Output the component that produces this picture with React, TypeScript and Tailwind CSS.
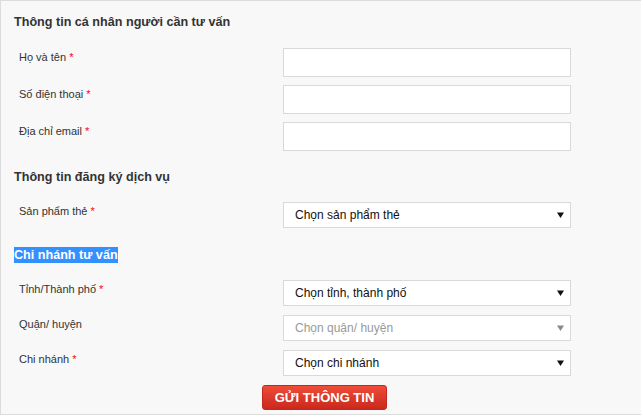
import React from 'react';

const font = { fontFamily: '"Liberation Sans", Arial, sans-serif' };

const Label = ({ text, required }: { text: string; required?: boolean }) => (
  <div className="w-[269px] shrink-0 pl-[5px] pt-[1px] text-[11px] leading-[16px] text-[#333]">
    {text}
    {required && <span className="text-[#ff0000]"> *</span>}
  </div>
);

const TextRow = ({ label }: { label: string }) => (
  <div className="flex h-[29px]">
    <Label text={label} required />
    <input
      type="text"
      className="h-[29px] w-[288px] border border-[#d9d9d9] bg-white outline-none"
    />
  </div>
);

const Arrow = ({ disabled }: { disabled?: boolean }) => (
  <svg width="7" height="6" viewBox="0 0 7 6" className={disabled ? 'text-[#8a8a8a]' : 'text-[#111]'}>
    <path d="M0 0.5 H7 L3.5 6 Z" fill="currentColor" />
  </svg>
);

const SelectRow = ({
  label,
  placeholder,
  required,
  disabled,
}: {
  label: string;
  placeholder: string;
  required?: boolean;
  disabled?: boolean;
}) => (
  <div className="flex h-[26px]">
    <Label text={label} required={required} />
    <div className="flex h-[26px] w-[288px] items-center justify-between border border-[#d9d9d9] bg-white pl-[11px] pr-[6px]">
      <span className={`text-[12px] ${disabled ? 'text-[#999]' : 'text-[#111]'}`}>{placeholder}</span>
      <Arrow disabled={disabled} />
    </div>
  </div>
);

export default function App() {
  return (
    <div className="min-h-[418px] bg-white" style={font}>
      <div className="h-[415px] w-[641px] border-t border-l border-b border-[#dcdcdc] bg-[#f8f8f8] pl-[13px]">
        <h3 className="mt-[11px] text-[12.6px] font-bold leading-[20px] text-[#333]">
          Thông tin cá nhân người cần tư vấn
        </h3>

        <div className="mt-[16px] flex flex-col gap-[8px]">
          <TextRow label="Họ và tên" />
          <TextRow label="Số điện thoại" />
          <TextRow label="Địa chỉ email" />
        </div>

        <h3 className="mt-[16px] text-[12.6px] font-bold leading-[20px] text-[#333]">
          Thông tin đăng ký dịch vụ
        </h3>

        <div className="mt-[15px]">
          <SelectRow label="Sản phẩm thẻ" placeholder="Chọn sản phẩm thẻ" required />
        </div>

        <h3 className="mt-[19px] h-[16px] text-[12.6px] font-bold leading-[16px]">
          <span className="inline-block bg-[#3390ff] text-white">Chi nhánh tư vấn</span>
        </h3>

        <div className="mt-[17px] flex flex-col gap-[9px]">
          <SelectRow label="Tỉnh/Thành phố" placeholder="Chọn tỉnh, thành phố" required />
          <SelectRow label="Quận/ huyện" placeholder="Chọn quận/ huyện" disabled />
          <SelectRow label="Chi nhánh" placeholder="Chọn chi nhánh" required />
        </div>

        <button
          type="button"
          className="ml-[248px] mt-[9px] flex h-[25px] w-[125px] items-center justify-center rounded-[3px] border border-[#c02a1e] bg-gradient-to-b from-[#ef4b38] to-[#c9281c] text-[13px] font-bold text-white"
        >
          GỬI THÔNG TIN
        </button>
      </div>
    </div>
  );
}
